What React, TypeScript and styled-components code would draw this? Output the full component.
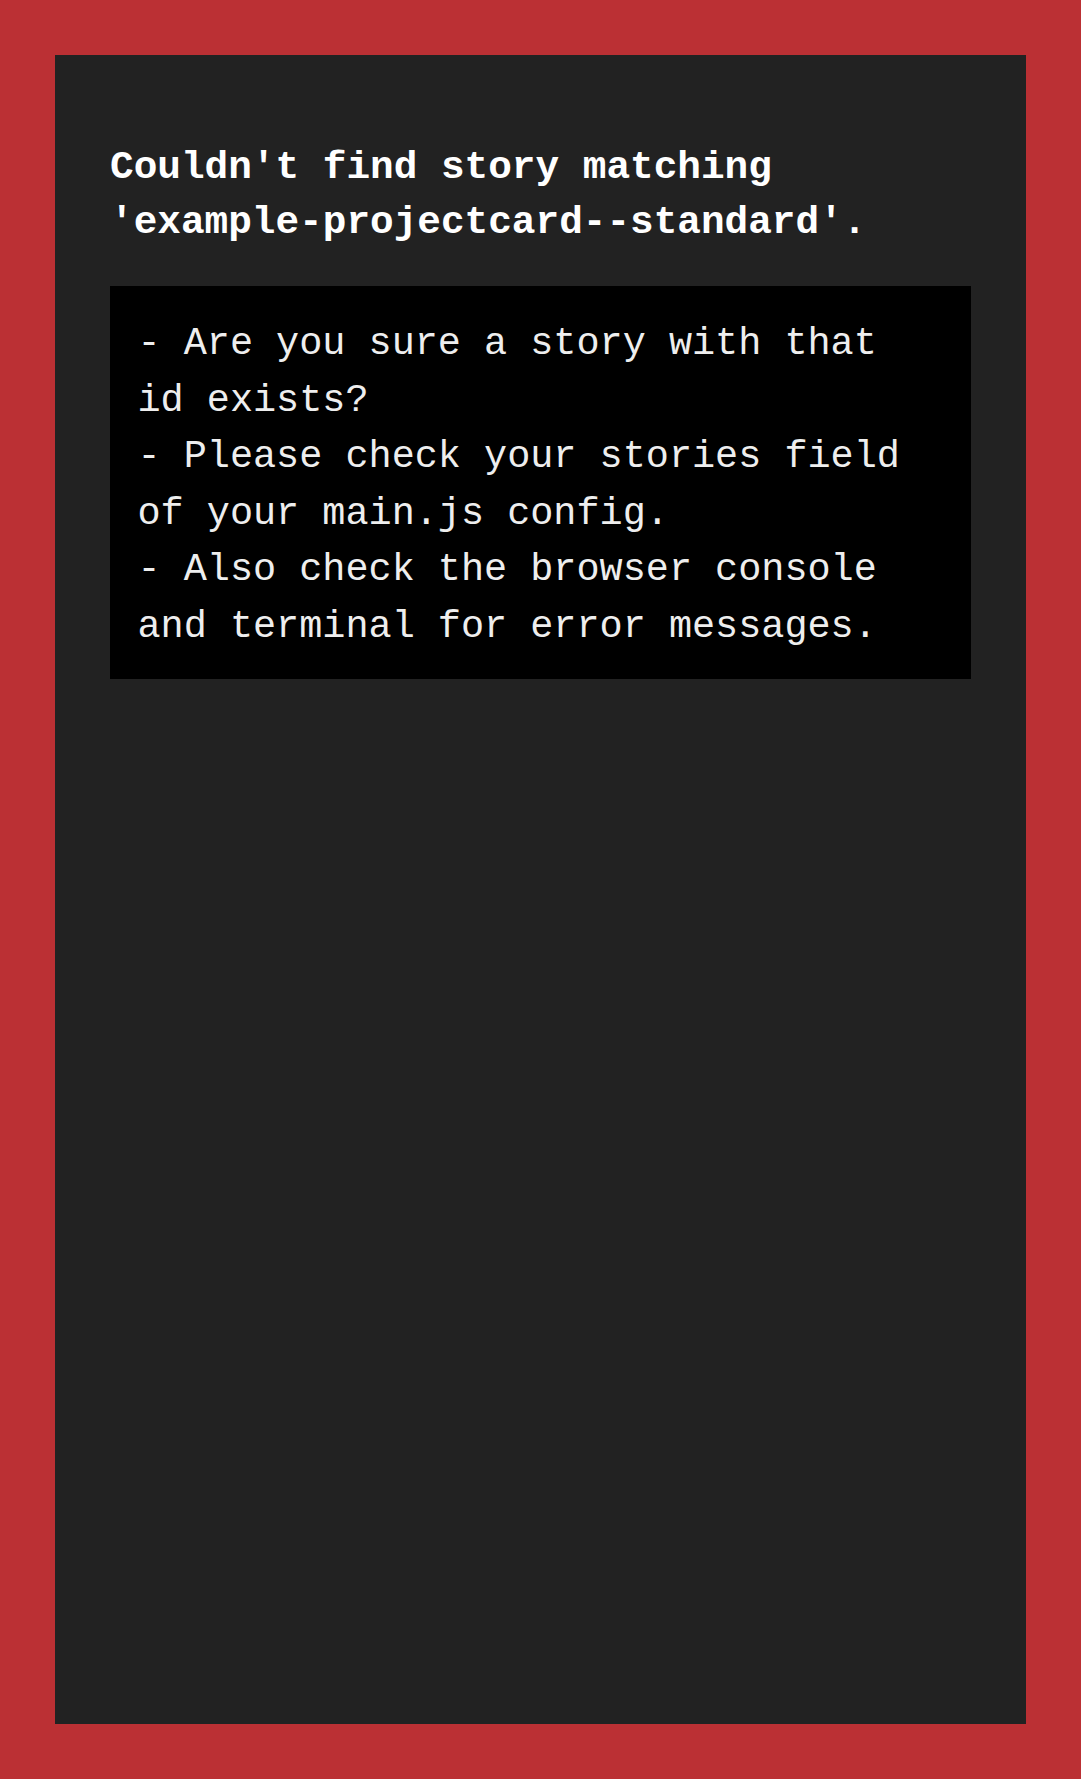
import React from "react";
import styled, { createGlobalStyle } from "styled-components";

const Global = createGlobalStyle`
  html, body {
    margin: 0;
    padding: 0;
    height: 100%;
    background: #222222;
  }
  #root { height: 100%; }
`;

const Frame = styled.div`
  box-sizing: border-box;
  min-height: 1779px;
  height: 100%;
  border: 55px solid rgb(187, 48, 52);
  background: #222222;
  padding: 55px;
  color: #ffffff;
  font-family: "Liberation Mono", "Courier New", monospace;
`;

const Title = styled.h1`
  margin: 30px 0 36px;
  font-size: 39.4px;
  line-height: 55px;
  font-weight: 700;
  color: #ffffff;
`;

const Code = styled.pre`
  margin: 0;
  padding: 30px 27.5px 23.6px;
  background: #000000;
  color: #eeeeee;
  font-family: "Liberation Mono", "Courier New", monospace;
  font-size: 38.5px;
  line-height: 56.6px;
  white-space: pre-wrap;
`;

const hints = [
  "- Are you sure a story with that id exists?",
  "- Please check your stories field of your main.js config.",
  "- Also check the browser console and terminal for error messages.",
];

export default function App() {
  return (
    <>
      <Global />
      <Frame>
        <Title>Couldn't find story matching 'example-projectcard--standard'.</Title>
        <Code>{hints.join("\n")}</Code>
      </Frame>
    </>
  );
}
